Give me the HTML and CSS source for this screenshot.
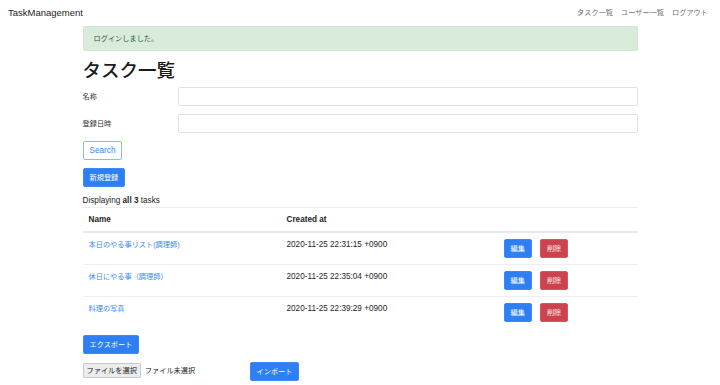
FILE: index.html
```html
<!DOCTYPE html>
<html lang="ja">
<head>
    <meta charset="UTF-8">
    <meta name="viewport" content="width=device-width, initial-scale=1.0">
    <title>TaskManagement</title>
    <link rel="stylesheet" href="styles.css">
</head>
<body>
    <!-- ナビゲーション -->
    <nav class="navbar">
        <a class="brand" href="#">TaskManagement</a>
        <ul class="nav-links">
            <li><a href="#">タスク一覧</a></li>
            <li><a href="#">ユーザー一覧</a></li>
            <li><a href="#">ログアウト</a></li>
        </ul>
    </nav>

    <!-- メイン -->
    <main class="container">
        <div class="alert">ログインしました。</div>

        <h1 class="page-title">タスク一覧</h1>

        <form class="search-form">
            <div class="form-row">
                <label class="form-label">名称</label>
                <input class="form-input" type="text">
            </div>
            <div class="form-row">
                <label class="form-label">登録日時</label>
                <input class="form-input" type="text">
            </div>
            <div class="toolbar">
                <button class="btn btn-outline" type="button">Search</button>
            </div>
        </form>

        <div class="toolbar">
            <a class="btn btn-primary ja" href="#">新規登録</a>
        </div>

        <p class="summary">Displaying <b>all 3</b> tasks</p>

        <table class="task-table">
            <thead>
                <tr>
                    <th class="col-name">Name</th>
                    <th class="col-date">Created at</th>
                    <th></th>
                </tr>
            </thead>
            <tbody>
                <tr>
                    <td><a class="task-link" href="#">本日のやる事リスト(調理師)</a></td>
                    <td>2020-11-25 22:31:15 +0900</td>
                    <td>
                        <div class="row-actions">
                            <a class="btn btn-primary ja" href="#">編集</a>
                            <a class="btn btn-danger ja" href="#">削除</a>
                        </div>
                    </td>
                </tr>
                <tr>
                    <td><a class="task-link" href="#">休日にやる事（調理師）</a></td>
                    <td>2020-11-25 22:35:04 +0900</td>
                    <td>
                        <div class="row-actions">
                            <a class="btn btn-primary ja" href="#">編集</a>
                            <a class="btn btn-danger ja" href="#">削除</a>
                        </div>
                    </td>
                </tr>
                <tr>
                    <td><a class="task-link" href="#">料理の写真</a></td>
                    <td>2020-11-25 22:39:29 +0900</td>
                    <td>
                        <div class="row-actions">
                            <a class="btn btn-primary ja" href="#">編集</a>
                            <a class="btn btn-danger ja" href="#">削除</a>
                        </div>
                    </td>
                </tr>
            </tbody>
        </table>

        <div class="toolbar">
            <a class="btn btn-primary ja" href="#">エクスポート</a>
        </div>

        <form class="import-form">
            <span class="file-field">
                <span class="file-btn">ファイルを選択</span>
                <span class="file-name">ファイル未選択</span>
            </span>
            <button class="btn btn-primary ja" type="button">インポート</button>
        </form>
    </main>
</body>
</html>
```

FILE: styles.css
```css
* {
    margin: 0;
    padding: 0;
    box-sizing: border-box;
}

body {
    font-family: 'Liberation Sans', 'Noto Sans CJK JP', sans-serif;
    font-size: 8.2px;
    line-height: 12px;
    color: #1e1e1e;
    background-color: #fff;
}

a {
    text-decoration: none;
}

/* ナビゲーション */
.navbar {
    height: 26px;
    padding: 0 8px;
    display: flex;
    justify-content: space-between;
    align-items: center;
}

.brand {
    font-size: 9.5px;
    color: #1c1c1c;
}

.nav-links {
    list-style: none;
    display: flex;
    margin-right: 4px;
}

.nav-links li + li {
    margin-left: 8px;
}

.nav-links a {
    display: block;
    font-size: 7.2px;
    color: #6f6f6f;
}

/* メイン */
.container {
    width: 555px;
    margin: 0 auto;
}

.alert {
    padding: 6px 10px 5px;
    margin-bottom: 8px;
    border: 1px solid #cfe6d2;
    border-radius: 2px;
    background-color: #d9ecdb;
    color: #2f5a36;
    font-size: 7.2px;
}

.page-title {
    font-size: 18.5px;
    line-height: 24px;
    font-weight: 500;
    color: #1b1b1b;
    margin-bottom: 4px;
}

.form-row {
    display: grid;
    grid-template-columns: 95px 1fr;
    align-items: center;
    margin-bottom: 8px;
}

.form-label {
    font-size: 7.2px;
    color: #333;
}

.form-input {
    height: 19px;
    border: 1px solid #e1e3e6;
    border-radius: 2px;
    background-color: #fff;
}

.toolbar {
    display: flex;
    margin-bottom: 8px;
}

.btn {
    display: inline-flex;
    align-items: center;
    height: 19px;
    padding: 0 6px;
    border: 1px solid transparent;
    border-radius: 2px;
    font-family: inherit;
    font-size: 8.2px;
    line-height: 12px;
    cursor: pointer;
}

.btn.ja {
    font-size: 7.2px;
}

.btn-outline {
    background-color: #fff;
    border-color: #8db8f6;
    color: #3b86f4;
}

.btn-primary {
    background-color: #2f7ff4;
    border-color: #4089f5;
    color: #fff;
}

.btn-danger {
    background-color: #cc424e;
    border-color: #d65762;
    color: #fbe8ea;
}

.summary {
    margin-bottom: 0;
}

/* 一覧テーブル */
.task-table {
    width: 100%;
    border-collapse: collapse;
    margin-bottom: 7px;
}

.task-table th,
.task-table td {
    padding: 6px;
    text-align: left;
    vertical-align: top;
    border-top: 1px solid #eceef0;
}

.task-table th {
    padding-bottom: 5px;
    border-bottom: 2px solid #e7e9eb;
    font-weight: bold;
}

.col-name { width: 198px; }
.col-date { width: 217px; }

.task-link {
    font-size: 7.2px;
    color: #3c88f5;
}

.row-actions {
    display: flex;
    gap: 8px;
}

/* インポート */
.import-form {
    display: flex;
    align-items: flex-start;
}

.file-field {
    width: 167px;
    display: flex;
    align-items: center;
    margin-top: 1px;
    font-size: 7.2px;
}

.file-btn {
    height: 15px;
    padding: 0 3px;
    display: flex;
    align-items: center;
    background-color: #ececec;
    border: 1px solid #c9c9c9;
    border-radius: 1px;
    color: #222;
}

.file-name {
    margin-left: 4px;
    color: #222;
}
```
